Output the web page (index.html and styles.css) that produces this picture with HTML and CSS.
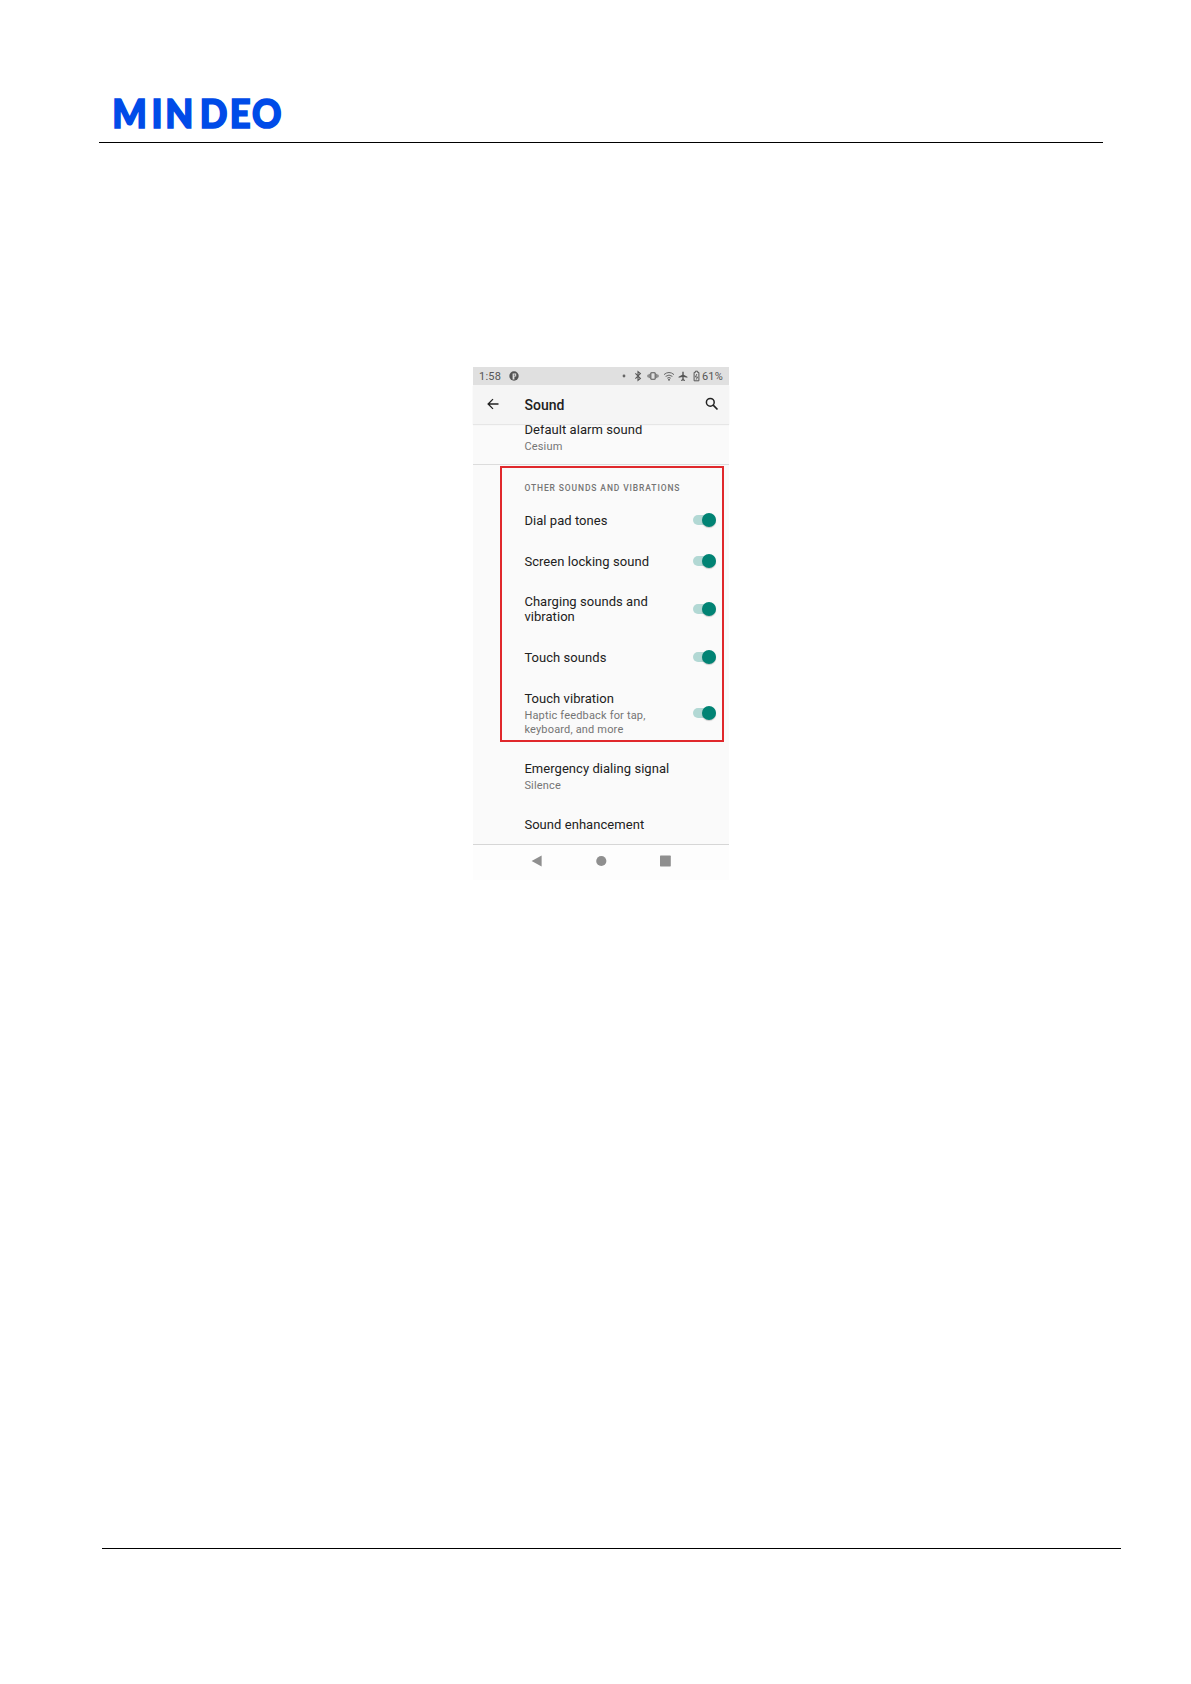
FILE: index.html
```html
<!DOCTYPE html>
<html lang="en">
<head>
  <meta charset="UTF-8">
  <meta name="viewport" content="width=device-width, initial-scale=1">
  <title>Mindeo - Sound settings</title>
  <link rel="stylesheet" href="styles.css">
</head>
<body>
  <header class="page-header">
    <svg class="logo" width="190" height="54" viewBox="0 0 190 54">
      <text y="41" x="1.4 43.9 59.1 96.6 129.2 153.2" transform="scale(.92 1)">MINDEO</text>
    </svg>
  </header>

  <main class="content">
    <div class="phone">
      <div class="status-bar">
        <span class="time">1:58</span>
        <svg class="app-icon" width="10" height="10" viewBox="0 0 10 10"><circle cx="5" cy="5" r="4.7" fill="#555"/><path d="M3.6 2.6h3.6v2.9H5.4v3H3.6z" fill="#e0e0e0"/><path d="M4.8 3.5h1.4v1.2H4.8z" fill="#666"/></svg>
        <div class="status-icons">
          <svg width="4" height="12" viewBox="0 0 4 12"><circle cx="2" cy="6" r="1.4" fill="#666"/></svg>
          <svg class="bt" width="8" height="12" viewBox="0 0 8 12"><path d="M1.4 3.4l5 5L4 10.4V1.6l2.4 2-5 5" fill="none" stroke="#555" stroke-width="1.1"/></svg>
          <svg class="vib" width="12" height="12" viewBox="0 0 12 12"><rect x="3.8" y="2.8" width="4.4" height="6.4" rx=".8" fill="none" stroke="#555" stroke-width="1.1"/><path d="M2.2 3.9v4.2M9.8 3.9v4.2M1 4.8v2.4M11 4.8v2.4" stroke="#666"/></svg>
          <svg class="wifi" width="12" height="12" viewBox="0 0 12 12"><path d="M1 4.6Q6 .4 11 4.6M2.6 6.4Q6 3.7 9.4 6.4M4.2 8.2Q6 6.8 7.8 8.2" fill="none" stroke="#666"/><circle cx="6" cy="9.7" r="1" fill="#666"/></svg>
          <svg class="plane" width="10" height="12" viewBox="0 0 10 12"><path d="M4.3 1.9q.7-1 1.4 0v2.9l3.7 1.9v1.1L5.7 7v2.2l1.2.9v.8L5 10.4l-1.9.5v-.8l1.2-.9V7L.6 7.8V6.7l3.7-1.9z" fill="#555"/></svg>
          <svg class="battery" width="7" height="12" viewBox="0 0 7 12"><path d="M1.1 2.4h1.3V1.2h2.2v1.2h1.3v8.4H1.1z" fill="none" stroke="#555"/><path d="M3.9 4L2.4 7h2.2L3.2 9.6" fill="none" stroke="#555" stroke-width=".9"/></svg>
          <span class="percent">61%</span>
        </div>
      </div>

      <div class="app-bar">
        <svg class="back" width="12" height="12" viewBox="0 0 12 12"><path d="M11.5 6H1.2M6 1.1L1.1 6 6 10.9" fill="none" stroke="#222" stroke-width="1.3"/></svg>
        <h1 class="title">Sound</h1>
        <svg class="search" width="14" height="14" viewBox="0 0 14 14"><circle cx="5.3" cy="5.3" r="3.9" fill="none" stroke="#222" stroke-width="1.5"/><path d="M8.2 8.2l4.3 4.3" stroke="#222" stroke-width="1.7"/></svg>
      </div>

      <div class="settings">
        <div class="row alarm">
          <div class="text"><div class="name">Default alarm sound</div><div class="summary">Cesium</div></div>
        </div>
        <div class="category">OTHER SOUNDS AND VIBRATIONS</div>
        <div class="row">
          <div class="text"><div class="name">Dial pad tones</div></div>
          <div class="switch"></div>
        </div>
        <div class="row">
          <div class="text"><div class="name">Screen locking sound</div></div>
          <div class="switch"></div>
        </div>
        <div class="row">
          <div class="text"><div class="name">Charging sounds and<br>vibration</div></div>
          <div class="switch"></div>
        </div>
        <div class="row">
          <div class="text"><div class="name">Touch sounds</div></div>
          <div class="switch"></div>
        </div>
        <div class="row">
          <div class="text"><div class="name">Touch vibration</div><div class="summary">Haptic feedback for tap,<br>keyboard, and more</div></div>
          <div class="switch"></div>
        </div>
        <div class="row">
          <div class="text"><div class="name">Emergency dialing signal</div><div class="summary">Silence</div></div>
        </div>
        <div class="row last">
          <div class="text"><div class="name">Sound enhancement</div></div>
        </div>
        <div class="highlight"></div>
      </div>

      <div class="nav-bar">
        <svg width="12" height="12" viewBox="0 0 12 12"><path d="M10.6 .5v11L.6 6z" fill="#8f8f8f"/></svg>
        <svg width="12" height="12" viewBox="0 0 12 12"><circle cx="6.3" cy="6" r="5.1" fill="#8f8f8f"/></svg>
        <svg width="12" height="12" viewBox="0 0 12 12"><rect x="1" y=".6" width="10.8" height="10.8" rx=".6" fill="#8f8f8f"/></svg>
      </div>
    </div>
  </main>

  <footer class="page-footer"></footer>
</body>
</html>
```
FILE: styles.css
```css
* {
  box-sizing: border-box;
}
body {
  margin: 0;
  height: 1684px;
  display: flex;
  flex-direction: column;
  background-color: #fff;
  font-family: Roboto, sans-serif;
}
svg {
  display: block;
  flex: none;
}
.page-header {
  height: 143px;
  width: 1004px;
  margin-left: 99px;
  padding: 87px 0 0 12px;
  border-bottom: 1px solid #000;
}
.logo text {
  font-family: Lato, sans-serif;
  font-weight: 900;
  font-size: 39.5px;
  fill: #004be8;
  stroke: #004be8;
  stroke-width: 1.7px;
}
.content {
  flex: 1;
  padding: 224px 0 0 473px;
}
.page-footer {
  height: 136px;
  width: 1019px;
  margin-left: 102px;
  border-top: 1px solid #000;
}
.phone {
  width: 256px;
  height: 513px;
  display: flex;
  flex-direction: column;
  background-color: #fafafa;
  color: #212121;
}
/* Status bar */
.status-bar {
  height: 18px;
  display: flex;
  align-items: center;
  padding: 0 6px;
  background-color: #e0e0e0;
  color: #555;
  font-size: 11px;
}
.time {
  width: 30px;
  letter-spacing: 0.2px;
}
.status-icons {
  display: flex;
  align-items: center;
  margin-left: auto;
}
.bt {
  margin-left: 8px;
}
.vib {
  margin-left: 5px;
}
.wifi {
  margin-left: 4px;
}
.plane {
  margin-left: 3px;
}
.battery {
  margin: 0 2px 0 5px;
}
.percent {
  letter-spacing: 0.2px;
}
/* App bar */
.app-bar {
  height: 39px;
  display: flex;
  align-items: center;
  padding: 0 10px 0 14px;
  background-color: #f5f5f5;
  box-shadow: 0 1px 1px #e6e6e6;
  z-index: 1;
}
.back,
.search {
  margin-bottom: 1px;
}
.title {
  margin: 0 0 0 25.5px;
  font-size: 14px;
  font-weight: 500;
}
.search {
  margin-left: auto;
}
/* Settings list */
.settings {
  position: relative;
  height: 420px;
}
.row {
  display: flex;
  align-items: center;
  justify-content: space-between;
  padding: 12.85px 13.5px 12.85px 51.4px;
}
.row.alarm {
  height: 41px;
  padding: 0 0 14px 51.4px;
  border-bottom: 1px solid #dcdcdc;
}
.row.last {
  padding-top: 12px;
}
.name {
  font-size: 13px;
  line-height: 15px;
  letter-spacing: 0.05px;
}
.summary {
  margin: 3px 0 -1px;
  font-size: 11px;
  line-height: 14px;
  letter-spacing: 0.17px;
  color: #757575;
}
.category {
  height: 35px;
  padding: 17px 0 0 51.4px;
  font-size: 8.5px;
  line-height: 12px;
  font-weight: 500;
  letter-spacing: 0.88px;
  color: #757575;
}
.switch {
  width: 23px;
  height: 10px;
  border-radius: 5px;
  background-color: #b2d8d4;
  display: flex;
  align-items: center;
  justify-content: flex-end;
}
.switch::after {
  content: "";
  width: 14px;
  height: 14px;
  border-radius: 50%;
  background-color: #018374;
  box-shadow: 0 1px 1px rgba(0,0,0,0.2);
}
.highlight {
  position: absolute;
  left: 27px;
  top: 42px;
  width: 224px;
  height: 276px;
  border: 2px solid #e0282c;
}
/* Navigation bar */
.nav-bar {
  height: 36px;
  display: flex;
  justify-content: center;
  gap: 52px;
  padding-top: 10px;
  border-top: 1px solid #d6d6d6;
  background-color: #fdfdfd;
}
```
